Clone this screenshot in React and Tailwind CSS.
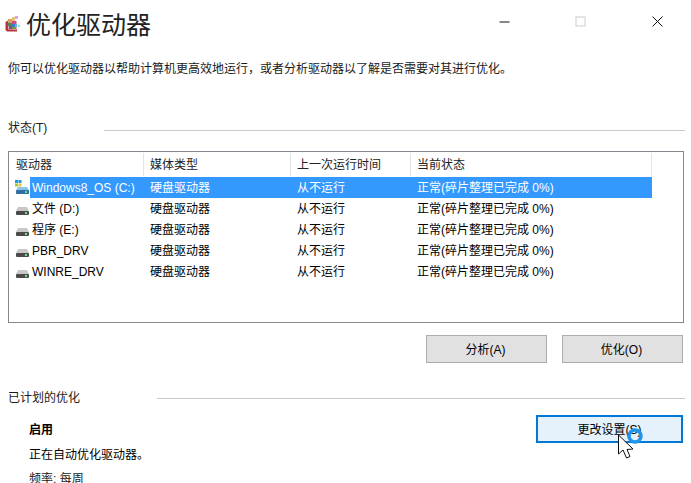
import React from 'react';

const FONT = { fontFamily: '"Liberation Sans", "Noto Sans CJK SC", sans-serif' };

const drives = [
  { name: 'Windows8_OS (C:)', system: true },
  { name: '文件 (D:)' },
  { name: '程序 (E:)' },
  { name: 'PBR_DRV' },
  { name: 'WINRE_DRV' },
];

const AppIcon = () => (
  <svg width="16" height="16" viewBox="0 0 16 16" className="shrink-0 -mt-[3px]">
    <path d="M0.5 6 L3 4.5 L3 13 L12 13.5 L12 15.5 L2 15.5 L0.5 14 Z" fill="#b8323f" />
    <rect x="3" y="5" width="9" height="8.5" fill="#e8a8b0" />
    <rect x="3" y="3" width="4" height="4" fill="#d8a060" />
    <rect x="7" y="1" width="3" height="4" fill="#e8c070" />
    <rect x="7" y="5" width="4" height="3" fill="#d04a90" />
    <rect x="3" y="7" width="4" height="3" fill="#4a8a50" />
    <rect x="7" y="8" width="3" height="3" fill="#3a7ad0" />
    <rect x="10" y="8" width="2" height="3" fill="#50b8e0" />
    <rect x="4" y="10" width="3" height="3" fill="#6a5a90" />
    <rect x="7" y="11" width="4" height="2" fill="#70a040" />
    <rect x="10" y="0" width="3" height="3" fill="#e0a0e8" />
    <rect x="13" y="9" width="2" height="2" fill="#90d8f0" />
  </svg>
);

const DriveIcon = ({ system }) => (
  <svg width="15" height="16" viewBox="0 0 15 16" className="shrink-0">
    {system && (
      <g>
        <rect x="0" y="0" width="3" height="3" fill="#1f9ae0" />
        <rect x="3.5" y="0" width="3" height="3" fill="#1f9ae0" />
        <rect x="0" y="3.5" width="3" height="3" fill="#a0c838" />
        <rect x="3.5" y="3.5" width="3" height="3" fill="#e8c838" />
      </g>
    )}
    <path d={system ? 'M3 7 L12 7 L14 10 L1 10 Z' : 'M3 6 L12 6 L14 10 L1 10 Z'} fill={system ? '#8cc4e8' : '#c8c8c8'} />
    <rect x="1" y="10" width="13" height="4" rx="1" fill={system ? '#2f6f9f' : '#4a4a4a'} />
    <rect x="10" y="11" width="2" height="2" fill="#6fe07f" />
  </svg>
);

const Cell = ({ className, children }) => (
  <div className={`px-[6px] truncate ${className}`}>{children}</div>
);

const Button = ({ className, children }) => (
  <button className={`h-[28px] pr-[2px] pt-[1px] bg-[#e1e1e1] border border-[#adadad] text-[12px] text-black ${className}`}>
    {children}
  </button>
);

const App = () => {
  return (
    <div className="relative w-[691px] h-[483px] bg-white overflow-hidden text-[12px] leading-[16px] text-[#1a1a1a]" style={FONT}>
      {/* Title bar */}
      <div className="flex items-start h-[50px]">
        <div className="flex items-center gap-[5px] pl-[5px] pt-[9px]">
          <AppIcon />
          <span className="text-[25px] leading-[32px] text-[#222]">优化驱动器</span>
        </div>
        <div className="ml-auto flex pt-[16px] pr-[28px] gap-[66px]">
          <svg width="11" height="11" viewBox="0 0 11 11"><path d="M0.5 6 H10.5" stroke="#111" /></svg>
          <svg width="11" height="11" viewBox="0 0 11 11" className="-ml-[1px]"><rect x="1" y="1" width="9" height="9" fill="none" stroke="#ccc" /></svg>
          <svg width="11" height="11" viewBox="0 0 11 11"><path d="M0.5 0.5 L10.5 10.5 M10.5 0.5 L0.5 10.5" stroke="#111" /></svg>
        </div>
      </div>

      <p className="pl-[8px] mt-[11px]">你可以优化驱动器以帮助计算机更高效地运行，或者分析驱动器以了解是否需要对其进行优化。</p>

      {/* Status */}
      <div className="flex items-center pl-[8px] mt-[43px]">
        <span>状态(T)</span>
        <div className="ml-[57px] mr-[6px] mt-[4px] flex-1 h-px bg-[#c8c8c8]" />
      </div>

      <div className="mx-[8px] mt-[15px] h-[172px] w-[676px] border border-[#828790] pt-[1px] pl-[1px]">
        <div className="flex h-[23px] items-center text-[#222]">
          <Cell className="w-[134px] border-r border-[#e5e5e5] h-full leading-[24px]">驱动器</Cell>
          <Cell className="w-[147px] border-r border-[#e5e5e5] h-full leading-[24px]">媒体类型</Cell>
          <Cell className="w-[120px] border-r border-[#e5e5e5] h-full leading-[24px]">上一次运行时间</Cell>
          <Cell className="w-[241px] border-r border-[#e5e5e5] h-full leading-[24px]">当前状态</Cell>
        </div>
        <div className="pt-[1px]">
          {drives.map((d, i) => (
            <div key={d.name} className="flex h-[21px] items-center w-[642px]">
              <div className="flex items-center w-[134px] h-full pl-[5px]">
                <DriveIcon system={d.system} />
                <span className={`flex-1 h-full leading-[23px] pl-[2px] ${i === 0 ? 'bg-[#3399ff] text-white' : 'text-black'}`}>{d.name}</span>
              </div>
              <div className={`flex h-full leading-[23px] flex-1 ${i === 0 ? 'bg-[#3399ff] text-white' : 'text-black'}`}>
                <div className="w-[147px] pl-[6px]">硬盘驱动器</div>
                <div className="w-[120px] pl-[6px]">从不运行</div>
                <div className="pl-[6px]">正常(碎片整理已完成 0%)</div>
              </div>
            </div>
          ))}
        </div>
      </div>

      {/* Actions */}
      <div className="flex justify-end gap-[15px] pr-[8px] mt-[12px]">
        <Button className="w-[121px]">分析(A)</Button>
        <Button className="w-[121px]">优化(O)</Button>
      </div>

      {/* Scheduled */}
      <div className="flex items-center pl-[8px] mt-[27px]">
        <span>已计划的优化</span>
        <div className="ml-[77px] mr-[6px] mt-[1px] flex-1 h-px bg-[#c8c8c8]" />
      </div>

      <div className="flex pl-[29px] pr-[8px] mt-[9px]">
        <div className="flex-1 pt-[7px]">
          <div className="font-bold text-black">启用</div>
          <div className="mt-[9px] text-black">正在自动优化驱动器。</div>
          <div className="mt-[8px]">频率: 每周</div>
        </div>
        <button className="w-[147px] h-[28px] pt-[1px] bg-[#e5f1fb] border-2 border-[#0078d7] text-[12px] text-black">更改设置(S)</button>
      </div>

      {/* Busy cursor */}
      <svg width="28" height="36" viewBox="0 0 28 36" className="absolute left-[617px] top-[426px]">
        <circle cx="18" cy="10" r="6" fill="none" stroke="#2196e8" strokeWidth="3.5" />
        <path d="M1.5 9 L1.5 28 L6 24 L9.5 32 L13 30.5 L10 23.5 L16 23 Z" fill="#fff" stroke="#111" strokeWidth="1" />
      </svg>
    </div>
  );
};

export default App;
